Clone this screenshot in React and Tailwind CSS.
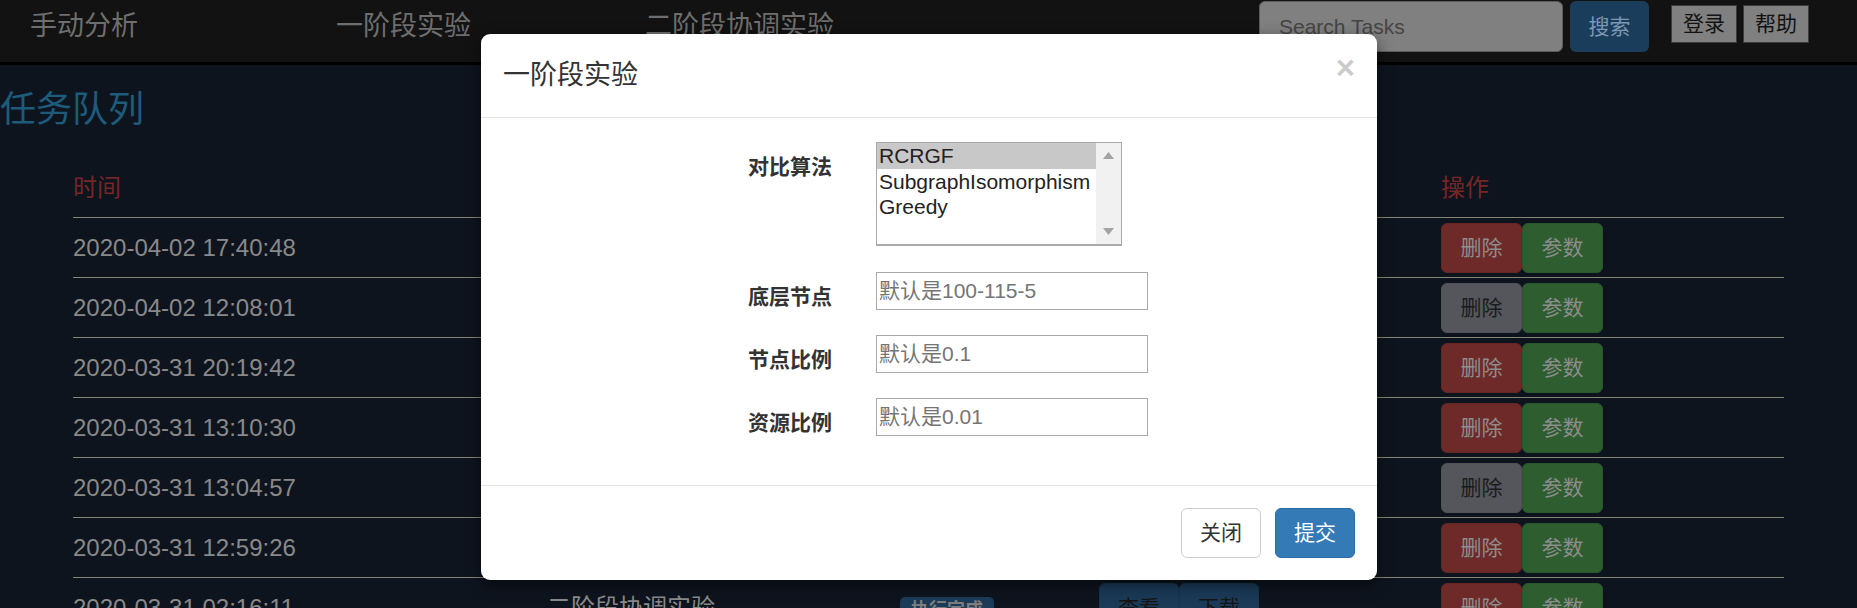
import React from 'react'

const rows = [
  { time: '2020-04-02 17:40:48', type: '一阶段实验', locked: false },
  { time: '2020-04-02 12:08:01', type: '一阶段实验', locked: true },
  { time: '2020-03-31 20:19:42', type: '二阶段协调实验', locked: false },
  { time: '2020-03-31 13:10:30', type: '一阶段实验', locked: false },
  { time: '2020-03-31 13:04:57', type: '二阶段协调实验', locked: true },
  { time: '2020-03-31 12:59:26', type: '一阶段实验', locked: false },
  { time: '2020-03-31 02:16:11', type: '二阶段协调实验', locked: false },
]

const fields = [
  { label: '底层节点', placeholder: '默认是100-115-5' },
  { label: '节点比例', placeholder: '默认是0.1' },
  { label: '资源比例', placeholder: '默认是0.01' },
]

const TaskRow = ({ row }) => {
  return (
    <div className="grid grid-cols-[474px_353px_199px_342px_1fr] h-[60px] border-b border-[#858574] items-center text-[24px] text-[#898989]">
      <div className="leading-[30px]">{row.time}</div>
      <div className="leading-[30px]">{row.type}</div>
      <div>
        <span className="inline-block bg-[#1c3b58] text-[#7d7d7d] font-bold text-[18px] leading-[18px] px-[11px] pt-[4px] pb-[5px] rounded-[5px]">执行完成</span>
      </div>
      <div className="flex">
        <button className="w-[80px] h-[50px] rounded-[6px] bg-[#1b3a57] border border-[#193550] text-[#151515] text-[21px]">查看</button>
        <button className="w-[80px] h-[50px] rounded-[6px] bg-[#1b3a57] border border-[#193550] text-[#151515] text-[21px]">下载</button>
      </div>
      <div className="flex">
        {row.locked ? (
          <button className="w-[81px] h-[50px] rounded-[6px] bg-[#55565b] border border-[#505156] text-[#1b1b1b] text-[21px]">删除</button>
        ) : (
          <button className="w-[81px] h-[50px] rounded-[6px] bg-[#6d2a28] border border-[#652624] text-[#8d8d8d] text-[21px]">删除</button>
        )}
        <button className="w-[81px] h-[50px] rounded-[6px] bg-[#2e5d2f] border border-[#2a562b] text-[#8d8d8d] text-[21px]">参数</button>
      </div>
    </div>
  )
}

const App = () => {
  return (
    <div className="relative w-full h-[608px] overflow-hidden bg-[#0e141e] font-['Liberation_Sans','Noto_Sans_CJK_SC',sans-serif]">

      {/* navbar */}
      <nav className="h-[65px] bg-[#121212] border-b-[3px] border-black flex items-start">
        <div className="w-[336px] pl-[30px] text-[27px] leading-[52px] text-[#6e6e6e]">手动分析</div>
        <div className="w-[309px] text-[27px] leading-[52px] text-[#6e6e6e]">一阶段实验</div>
        <div className="text-[27px] leading-[52px] text-[#6e6e6e]">二阶段协调实验</div>

        <div className="ml-auto pr-[48px] flex items-start">
          <div className="mt-[1px] w-[304px] h-[51px] bg-[#808080] border border-[#5c5c5c] rounded-[6px] flex items-center pl-[19px] text-[21px] text-[#454545]">Search Tasks</div>
          <button className="ml-[7px] mt-[1px] w-[79px] h-[51px] bg-[#1b3d5c] rounded-[6px] text-[21px] text-[#7d98b2]">搜索</button>
          <button className="ml-[22px] mt-[5px] w-[66px] h-[38px] bg-[#808080] border border-[#3c3c3c] text-[21px] text-[#121212]">登录</button>
          <button className="ml-[6px] mt-[5px] w-[66px] h-[38px] bg-[#808080] border border-[#3c3c3c] text-[21px] text-[#121212]">帮助</button>
        </div>
      </nav>

      {/* task queue */}
      <h3 className="mt-[25px] text-[36px] leading-[40px] text-[#1d5b7b]">任务队列</h3>

      <div className="ml-[73px] w-[1711px] mt-[28px]">
        <div className="grid grid-cols-[474px_353px_199px_342px_1fr] h-[60px] border-b border-[#858574] items-center text-[24px] leading-[30px] text-[#772626]">
          <div>时间</div>
          <div>类型</div>
          <div>状态</div>
          <div>结果</div>
          <div>操作</div>
        </div>
        {rows.map((row) => (
          <TaskRow key={row.time} row={row} />
        ))}
      </div>

      {/* modal */}
      <div className="absolute top-[34px] left-[481px] w-[896px] bg-white rounded-[9px] shadow-[0_5px_15px_rgba(0,0,0,0.5)] text-[#333]">

        <div className="h-[84px] border-b border-[#e5e5e5] flex justify-between px-[22px]">
          <h4 className="mt-[22px] text-[27px] leading-[38px]">一阶段实验</h4>
          <span className="mt-[16px] text-[33px] leading-[36px] font-bold text-black opacity-20">×</span>
        </div>

        <div className="pt-[24px] pb-[47px] px-[22px] flex flex-col">

          <div className="flex items-start">
            <div className="w-[329px] text-right font-bold text-[21px] leading-[30px] pt-[10px]">对比算法</div>
            <div className="ml-[44px] w-[246px] h-[104px] border border-[#a9a9a9] border-b-2 flex">
              <div className="flex-1 text-[21px] leading-[25px] text-[#222]">
                <div className="bg-[#c8c8c8] pl-[2px] h-[26px] leading-[26px]">RCRGF</div>
                <div className="pl-[2px]">SubgraphIsomorphism</div>
                <div className="pl-[2px]">Greedy</div>
              </div>
              <div className="w-[25px] bg-[#f1f1f1] flex flex-col items-center justify-between py-[9px]">
                <svg width="11" height="7" viewBox="0 0 11 7"><polygon points="5.5,0 11,7 0,7" fill="#a3a3a3" /></svg>
                <svg width="11" height="7" viewBox="0 0 11 7"><polygon points="0,0 11,0 5.5,7" fill="#a3a3a3" /></svg>
              </div>
            </div>
          </div>

          <div className="mt-[26px] flex flex-col gap-[23px]">
            {fields.map((f) => (
              <div key={f.label} className="flex items-start h-[40px]">
                <div className="w-[329px] text-right font-bold text-[21px] leading-[30px] pt-[10px]">{f.label}</div>
                <input
                  readOnly
                  placeholder={f.placeholder}
                  className="ml-[44px] w-[272px] h-[38px] border border-[#a9a9a9] px-[2px] text-[21px] placeholder:text-[#757575] outline-none"
                />
              </div>
            ))}
          </div>
        </div>

        <div className="border-t border-[#e5e5e5] pt-[22px] pb-[22px] px-[22px] flex justify-end gap-[14px]">
          <button className="w-[80px] h-[50px] rounded-[6px] bg-white border border-[#ccc] text-[21px] text-[#333]">关闭</button>
          <button className="w-[80px] h-[50px] rounded-[6px] bg-[#337ab7] border border-[#2e6da4] text-[21px] text-white">提交</button>
        </div>
      </div>

    </div>
  )
}

export default App
